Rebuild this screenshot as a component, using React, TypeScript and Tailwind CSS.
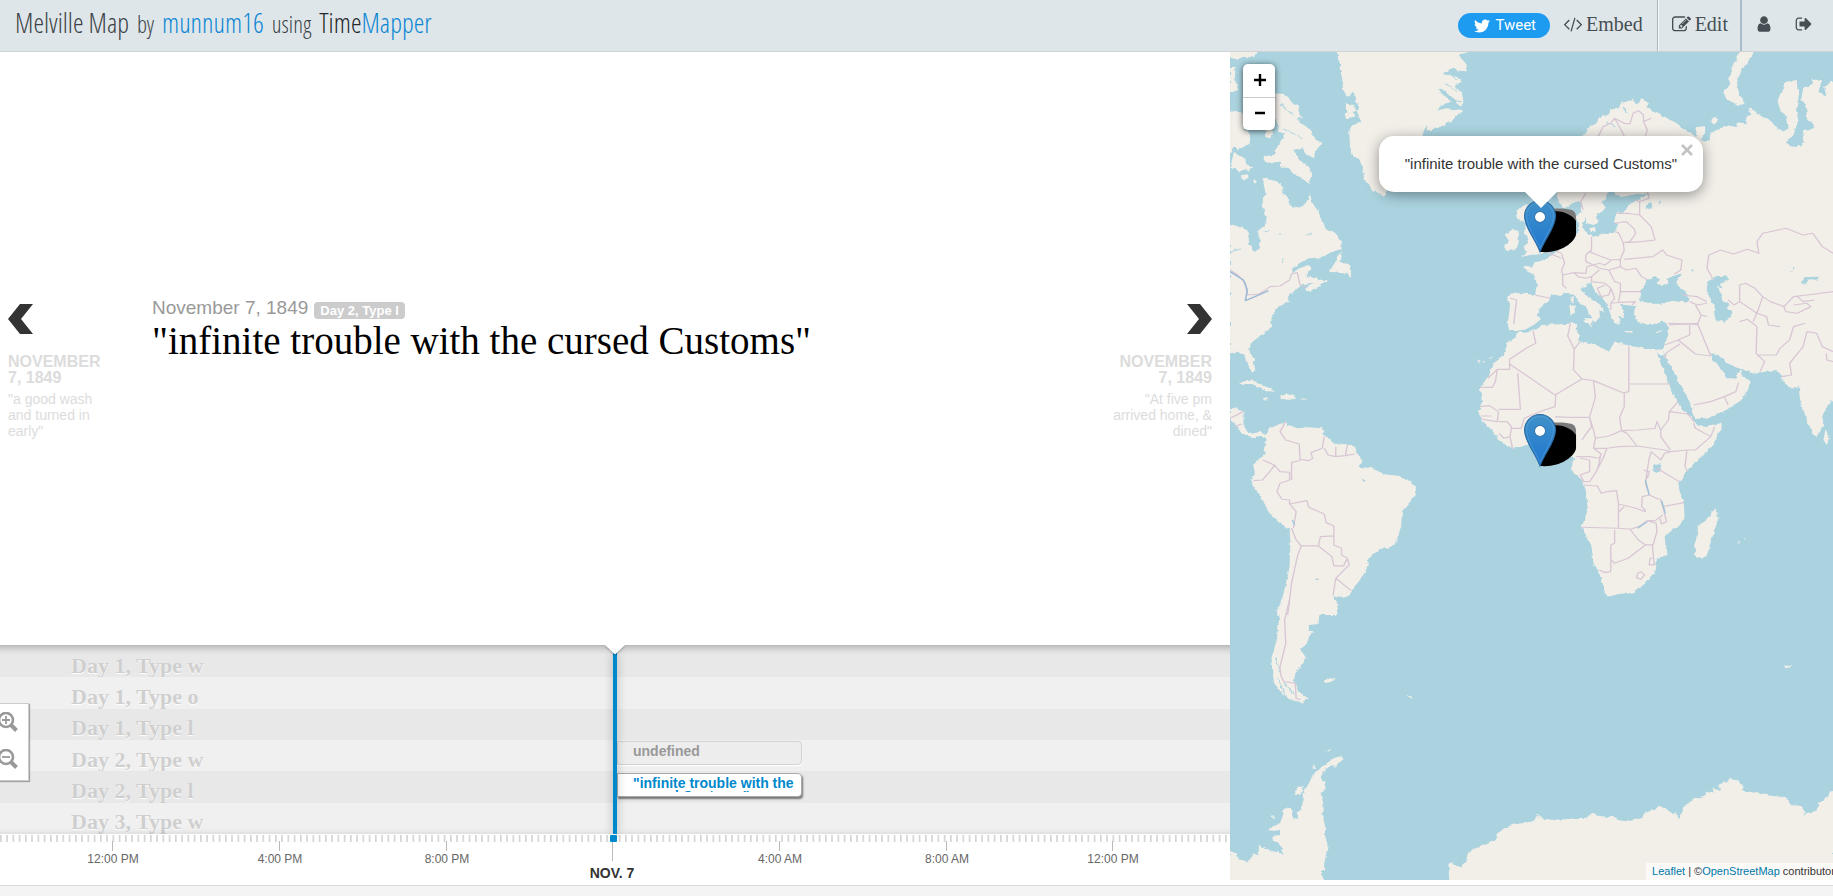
import React from "react";
import { FaTwitter } from "react-icons/fa";

const SANS = "font-['Liberation_Sans',Arial,sans-serif]";
const SERIF = "font-['Liberation_Serif',Georgia,serif]";

function Glyph({ d, className }: { d: string; className: string }) {
  return (
    <svg viewBox="0 0 1792 1792" className={className} fill="currentColor" overflow="visible" aria-hidden="true">
      <path d={d} />
    </svg>
  );
}

const CODE =
  "M553 1399l-50 50q-10 10-23 10t-23-10l-466-466q-10-10-10-23t10-23l466-466q10-10 23-10t23 10l50 50q10 10 10 23t-10 23l-393 393 393 393q10 10 10 23t-10 23zm591-1067l-373 1291q-4 13-15.5 19.5t-23.5 2.5l-62-17q-13-4-19.5-15.5t-2.5-24.5l373-1291q4-13 15.5-19.5t23.5-2.5l62 17q13 4 19.5 15.5t2.5 24.5zm657 651l-466 466q-10 10-23 10t-23-10l-50-50q-10-10-10-23t10-23l393-393-393-393q-10-10-10-23t10-23l50-50q10-10 23-10t23 10l466 466q10 10 10 23t-10 23z";
const PENCIL =
  "M888 1184l116-116-152-152-116 116v56h96v96h56zm440-720q-16-16-33 1l-350 350q-17 17-1 33t33-1l350-350q17-17 1-33zm80 594v190q0 119-84.5 203.5t-203.5 84.5h-832q-119 0-203.5-84.5t-84.5-203.5v-832q0-119 84.5-203.5t203.5-84.5h832q63 0 117 25 15 7 18 23 3 17-9 29l-49 49q-14 14-32 8-23-6-45-6h-832q-66 0-113 47t-47 113v832q0 66 47 113t113 47h832q66 0 113-47t47-113v-126q0-13 9-22l64-64q15-15 35-7t20 29zm-96-738l288 288-672 672h-288v-288zm444 132l-92 92-288-288 92-92q28-28 68-28t68 28l152 152q28 28 28 68t-28 68z";
const USER =
  "M1536 1399q0 109-62.5 187t-150.5 78h-854q-88 0-150.5-78t-62.5-187q0-85 8.5-160.5t31.5-152 58.5-131 94-89 134.5-34.5q131 128 313 128t313-128q76 0 134.5 34.5t94 89 58.5 131 31.5 152 8.5 160.5zm-256-887q0 159-112.5 271.5t-271.5 112.5-271.5-112.5-112.5-271.5 112.5-271.5 271.5-112.5 271.5 112.5 112.5 271.5z";
const SIGN_OUT =
  "M704 1440q0 4 1 20t.5 26.5-3 23.5-10 19.5-20.5 6.5h-320q-119 0-203.5-84.5t-84.5-203.5v-704q0-119 84.5-203.5t203.5-84.5h320q13 0 22.5 9.5t9.5 22.5q0 4 1 20t.5 26.5-3 23.5-10 19.5-20.5 6.5h-320q-66 0-113 47t-47 113v704q0 66 47 113t113 47h312l11.5 1 11.5 3 8 5.5 7 9 2 13.5zm928-544q0 26-19 45l-544 544q-19 19-45 19t-45-19-19-45v-288h-448q-26 0-45-19t-19-45v-384q0-26 19-45t45-19h448v-288q0-26 19-45t45-19 45 19l544 544q19 19 19 45z";

function Header() {
  return (
    <header className="flex h-[52px] shrink-0 items-center justify-between border-b border-[#cfd3d6] bg-[#dfe6ea] pl-[15px]">
      <h1 className="flex items-baseline gap-2 pb-1 font-['Open_Sans_Condensed_Light','Roboto_Condensed',Roboto,sans-serif] text-[27px] leading-[30px] font-light whitespace-nowrap text-[#3c4246]">
        <span>Melville Map</span>
        <span className="text-[23px]">by</span>
        <a href="#munnum16" className="text-[#0d86d3]">munnum16</a>
        <span className="text-[23px]">using</span>
        <a href="#timemapper" className="text-[#26292b]">
          Time<span className="text-[#0d86d3]">Mapper</span>
        </a>
      </h1>
      <nav className="flex h-full items-center text-[#454e53]">
        <button className="flex h-[25px] items-center gap-[5px] rounded-full bg-[#1d9bf0] pr-[14px] pl-4 font-['Roboto',sans-serif] text-[15px] text-white">
          <FaTwitter className="size-4" />
          Tweet
        </button>
        <a href="#embed" className={`${SERIF} flex h-full items-center gap-1 pr-[14px] pb-[3px] pl-[14px] text-[20px]`}>
          <Glyph d={CODE} className="size-[18px]" />
          Embed
        </a>
        <a href="#edit" className={`${SERIF} flex h-full items-center gap-1 border-l border-[#a9b6bf] pr-3 pb-[3px] pl-[14px] text-[20px] shadow-[inset_1px_0_0_#f6f9fa]`}>
          <Glyph d={PENCIL} className="size-[19px]" />
          Edit
        </a>
        <a href="#account" aria-label="Account" className="flex h-full items-center border-l-2 border-[#a9bccb] pr-3 pb-[3px] pl-[13px]">
          <Glyph d={USER} className="size-[18px]" />
        </a>
        <a href="#logout" aria-label="Log out" className="flex h-full items-center pr-5 pb-[3px] pl-[10px]">
          <Glyph d={SIGN_OUT} className="size-[18px]" />
        </a>
      </nav>
    </header>
  );
}

function SlideNav({ side, date, text }: { side: "prev" | "next"; date: string; text: string }) {
  const next = side === "next";
  return (
    <button
      className={`${SANS} flex w-[104px] shrink-0 flex-col text-[#dcdcdc] ${next ? "mr-[18px] items-end text-right" : "ml-2 items-start text-left"}`}
    >
      <svg viewBox="0 0 25 30" className="h-[30px] w-[25px]" fill="#333" aria-hidden="true">
        <path d={next ? "M0 0H13L25 15L13 30H0L12 15Z" : "M25 0H12L0 15L12 30H25L13 15Z"} />
      </svg>
      <span className="mt-5 w-[100px] text-[16px] leading-4 font-bold">{date}</span>
      <span className="mt-[5px] w-[100px] text-[14px] leading-4">{text}</span>
    </button>
  );
}

function Slide() {
  return (
    <section className="flex flex-1 items-start bg-white pt-[252px]">
      <SlideNav side="prev" date="NOVEMBER 7, 1849" text={'"a good wash and turned in early"'} />
      <article className="-mt-2 flex-1 pl-10">
        <div className={`${SANS} flex items-center gap-[6px] text-[19px] leading-6 text-[#999]`}>
          <time>November 7, 1849</time>
          <span className="mt-1 rounded bg-[#ccc] px-[6px] text-[13px] leading-[17px] font-bold text-white">Day 2, Type l</span>
        </div>
        <h2 className={`${SERIF} text-[39px] leading-[42px] whitespace-nowrap text-black`}>"infinite trouble with the cursed Customs"</h2>
      </article>
      <SlideNav side="next" date="NOVEMBER 7, 1849" text={'"At five pm arrived home, & dined"'} />
    </section>
  );
}

const LANES = ["Day 1, Type w", "Day 1, Type o", "Day 1, Type l", "Day 2, Type w", "Day 2, Type l", "Day 3, Type w"];
const HOURS = [
  { x: 112, label: "12:00 PM" },
  { x: 279, label: "4:00 PM" },
  { x: 446, label: "8:00 PM" },
  { x: 779, label: "4:00 AM" },
  { x: 946, label: "8:00 AM" },
  { x: 1112, label: "12:00 PM" },
];

function ZoomIcon({ minus }: { minus?: boolean }) {
  return (
    <svg viewBox="0 0 20 20" className="size-5" fill="none" stroke="#999" aria-hidden="true">
      <circle cx="8" cy="8" r="7" strokeWidth="2.6" />
      <path d={minus ? "M4 8H12" : "M4 8H12M8 4V12"} strokeWidth="1.8" />
      <path d="M13 13L18.500 18.500" strokeWidth="4" />
    </svg>
  );
}

function Timeline() {
  return (
    <section className={`${SANS} relative h-[240px] shrink-0 overflow-hidden bg-white`}>
      <div className="flex h-[189px] flex-col border-t border-[#b8b8b8]">
        {LANES.map((lane, i) => (
          <div
            key={lane + i}
            className={`${SERIF} flex flex-1 items-center pt-2 pl-[71px] text-[22px] leading-[22px] font-bold text-[#cfcfcf] [text-shadow:0_1px_1px_#fff] ${i % 2 ? "bg-[#f0f0f0]" : "bg-[#e8e8e8]"}`}
          >
            {lane}
          </div>
        ))}
      </div>
      <div className="absolute -inset-x-3 top-px h-[188px] shadow-[inset_0_5px_6px_-2px_rgba(0,0,0,0.2),inset_0_-4px_6px_-4px_rgba(0,0,0,0.15)]" />
      <svg className="h-[51px] w-full" aria-hidden="true">
        <defs>
          <pattern id="minor" width="6.25" height="8" patternUnits="userSpaceOnUse" x="0">
            <rect x="0" y="1" width="1.600" height="7" fill="#d2d2d2" />
          </pattern>
        </defs>
        <rect width="100%" height="8" fill="url(#minor)" />
        {HOURS.map((h) => (
          <rect key={h.x} x={h.x} y="7" width="1" height="10" fill="#bbb" />
        ))}
        <rect x="612" y="8" width="1" height="19" fill="#bbb" />
      </svg>
      {HOURS.map((h) => (
        <span key={h.x} className="absolute top-[206px] w-20 -translate-x-1/2 text-center text-[12px] leading-4 text-[#666]" style={{ left: h.x + 1 }}>
          {h.label}
        </span>
      ))}
      <span className="absolute top-[220px] left-[612px] -translate-x-1/2 text-[14px] leading-4 font-bold whitespace-nowrap text-[#333]">NOV. 7</span>

      <button className="absolute top-[96px] left-[617px] flex h-6 w-[185px] items-start rounded-r border border-[#d2d2d2] bg-[#ededed] pt-[3px] pl-[15px] text-left text-[14px] leading-[13px] font-bold text-[#999] shadow-[0_1px_1px_#fff]">
        undefined
      </button>
      <button className="absolute top-[128px] left-[617px] flex h-6 w-[185px] items-start rounded-r border border-[#aaa] bg-white pt-[3px] pl-[15px] text-left shadow-[1px_2px_2px_rgba(0,0,0,0.5)]">
        <span className="h-[15px] w-[164px] overflow-hidden text-[14px] leading-[13px] font-bold text-[#0088cc]">"infinite trouble with the cursed Customs"</span>
      </button>
      <div className="absolute top-2 left-[613px] h-[181px] w-1 bg-[#0088cc] shadow-[0_0_10px_rgba(0,0,0,0.3)]" />
      <div className="absolute top-[190px] left-[610px] size-[7px] rounded-[1px] bg-[#0088cc]" />
      <svg viewBox="0 0 20 10" className="absolute top-0 left-[605px] h-[10px] w-5 drop-shadow-[0_1px_1px_rgba(0,0,0,0.3)]" aria-hidden="true">
        <path d="M0 0H20L10 9.500Z" fill="#fff" />
      </svg>

      <div className="absolute top-[58px] -left-[3px] flex h-[78px] w-8 flex-col gap-[17px] border border-[#ccc] bg-white pt-2 shadow-[1px_1px_1px_rgba(0,0,0,0.3)]">
        <button aria-label="Zoom in"><ZoomIcon /></button>
        <button aria-label="Zoom out"><ZoomIcon minus /></button>
      </div>
    </section>
  );
}

const NORTH_LAND = [
  "M276 0L285 40 295 90 293 110 300 135 310 140 315 125 328 145 325 155 335 165 330 180 340 215 325 225 318 225 310 245 312 290 322 320 340 335 345 355 348 380 370 420 385 430 400 440 408 430 405 400 435 330 470 290 500 258 508 228 515 242 540 235 575 215 603 180 560 175 540 182 548 165 575 155 540 118 560 122 585 150 600 170 605 160 600 125 585 110 600 95 590 80 555 72 575 55 605 65 615 60 612 40 595 15 634 0Z",
  "M118 130L140 132 155 145 165 160 180 170 178 182 187 205 172 205 185 220 212 240 215 258 238 280 225 300 218 325 195 310 190 295 165 300 180 330 205 350 212 375 205 400 190 388 160 365 150 350 130 350 130 335 100 338 88 330 88 318 115 315 118 300 135 270 140 250 125 245 128 225 110 200Z",
  "M300 160L320 165 330 180 318 188 325 200 300 205 302 185Z",
  "M0 0H72L62 22 35 20 20 28 0 24Z",
  "M0 185L20 182 40 200 45 230 35 240 55 255 50 285 35 290 20 300 12 290 0 312Z",
  "M10 305L25 318 40 325 42 342 60 352 50 362 38 355 25 368 18 355 0 358Z",
  "M0 55L15 50 12 90 22 120 0 128Z",
  "M92 240h18l5 15-12 10-12-5Z",
  "M30 380l12-8 6 8-12 12ZM62 388l8 4-4 12-6-6Z",
  "M85 385L110 390 135 400 137 425 150 440 155 465 175 475 195 465 208 432 215 460 232 490 240 510 250 540 275 550 290 575 290 597 265 605 240 622 205 625 180 640 160 660 160 672 180 655 205 645 212 655 200 668 205 680 240 690 255 690 235 708 200 727 193 715 215 698 190 702 168 722 150 735 155 755 125 770 105 790 97 810 105 840H0V520L20 530 45 537 50 580 65 607 78 590 80 570 70 545 90 530 95 505 90 480 80 465 92 430Z",
  "M258 665L272 640 290 602 285 635 312 645 318 670 312 685 308 672 285 668Z",
  "M915 258L930 242 925 235 950 222 960 202 982 195 990 180 1010 175 1020 158 1045 150 1060 163 1070 148 1092 160 1080 172 1095 182 1130 200 1165 222 1190 245 1215 262 1210 232 1235 228 1235 250 1225 262 1232 275 1248 270 1248 250 1265 240 1290 225 1318 232 1320 218 1345 220 1340 200 1368 190 1400 210 1425 235 1440 245 1450 230 1445 200 1430 180 1424 150 1445 95 1475 90 1480 130 1472 180 1478 210 1465 255 1445 278 1470 292 1492 280 1488 245 1520 230 1500 205 1498 170 1485 150 1490 115 1515 105 1515 85 1540 95 1530 125 1550 140 1545 110 1568 95V840H1140L1150 822 1125 815 1090 825 1060 815 1050 790 1055 768 1030 765 1015 765 1020 785 1025 802 1010 797 1015 825 1000 818 988 790 985 775 970 745 950 725 940 702 930 700 925 712 910 713 925 735 945 750 973 778 972 790 960 780 962 800 948 820 940 800 925 770 905 755 895 735 878 728 860 738 835 733 830 752 812 768 800 790 805 810 790 825 765 840H725L722 820 728 770 722 735 732 727 770 732 793 735 798 700 790 675 762 655 765 648 785 650 790 638 810 632 830 620 845 605 855 600 880 585 890 560 905 545 905 520 898 505 915 485 925 500 915 530 925 545 945 560 970 552 1000 545 1010 520 998 515 1005 488 1030 482 1035 465 1060 450 1070 440 1095 435 1060 432 1020 440 1000 432 1000 400 940 300Z",
  "M845 418L855 455 868 475 890 462 905 450 915 470 915 485 930 520 945 525 955 520 955 495 978 475 968 458 985 425 990 400Z",
  "M745 485L765 465 790 455 800 510 820 540 840 575 835 600 810 612 780 615 755 622 770 605 760 590 775 575 765 545 770 520 750 510Z",
  "M735 538L752 545 750 580 745 593 720 602 712 590 725 572 715 555Z",
  "M1328 0H1366L1350 30 1330 60 1318 95 1322 130 1338 160 1320 168 1290 145 1282 125 1297 105 1300 70Z",
  "M1252 208L1262 200 1272 212 1260 224 1252 218Z",
  "M1350 172L1370 188 1362 197 1350 186Z",
  "M885 742L894 737 893 760 887 762Z",
  "M883 768L896 766 897 792 885 796Z",
  "M915 812L945 808 940 828Z",
  "M935 535L950 530 950 545 938 547Z",
];

const MIDDLE_LAND = [
  "M0 0H120L105 30 107 55 80 75 55 100 50 120 62 150 65 180 58 188 45 165 38 138 20 125 0 130Z",
  "M25 222L45 210 70 215 100 235 118 245 90 243 60 222Z",
  "M130 260L148 250 172 262 155 270 135 266Z",
  "M84 266L95 262 102 268 92 272Z",
  "M185 266H200V269H185Z",
  "M0 300L10 293 35 305 35 345 45 365 65 372 80 362 95 375 92 388 80 375 65 385 35 372 15 345 0 325Z",
  "M92 375L105 350 130 345 145 333 150 345 175 355 205 352 240 355 245 375 255 385 275 405 305 402 325 410 330 430 345 450 335 470 370 475 400 492 440 498 470 515 483 530 483 555 465 580 447 605 445 650 435 685 425 710 390 718 360 745 355 780 335 815 310 855 300 862 270 858 268 865 282 885 275 915H120L140 850 155 770 157 700 155 660 130 640 105 615 85 570 60 530 55 510 65 490 60 465 75 450 90 430 92 400Z",
  "M750 63L765 68 790 62 815 45 870 42 905 38 905 50 898 60 910 75 905 92 950 103 985 125 1000 95 1040 107 1090 118 1125 115 1130 140 1110 130 1125 175 1140 215 1150 250 1165 275 1175 300 1195 315 1212 345 1230 350 1278 338 1278 355 1255 405 1225 440 1185 485 1165 520 1170 550 1180 580 1182 620 1170 645 1130 680 1135 735 1110 745 1107 780 1080 820 1050 848 1010 852 985 860 975 850 970 825 960 790 945 760 940 710 920 665 915 650 930 600 925 540 915 510 890 485 890 465 895 440 870 440 850 415 830 405 800 408 770 405 735 417 700 390 680 360 655 330 645 305 655 280 650 235 670 200 685 160 715 135 720 100 745 80Z",
  "M1262 595L1272 630 1265 640 1255 680 1240 735 1225 747 1210 735 1207 705 1215 680 1213 650 1240 630Z",
  "M1140 30L1135 90 1125 118 1132 140 1150 175 1165 215 1195 275 1203 310 1210 328 1250 320 1290 300 1330 270 1357 215 1330 200 1328 178 1315 205 1290 205 1280 180 1255 150 1250 130 1265 132 1300 165 1335 180 1365 188 1420 183 1445 200 1432 202 1455 235 1475 235 1478 220 1482 270 1500 330 1515 370 1525 378 1545 350 1540 320 1555 280 1568 270V0H1140Z",
  "M1548 358L1560 385 1552 402 1543 390Z",
  "M1025 62L1048 64 1045 68 1028 66Z",
  "M1105 68L1122 60 1115 70Z",
  "M920 25L945 25 942 42Z",
  "M1320 693l8 3-6 3zM1338 684l5 3-4 2zM642 148l4 8 6-3zM655 152l8 2-3 4zM675 145l5-4-2 10z",
];

const SOUTH_LAND = [
  "M135 0H275L282 15 270 40 232 46 230 72 205 75 205 92 217 97 205 110 200 130 182 150 197 172 185 195 170 218 166 245 180 280 205 295 185 308 160 300 135 280 115 250 110 220 108 170 122 120 127 60Z",
  "M243 243L255 236 272 236 268 245 248 249Z",
  "M457 282L470 287 475 297 465 291Z",
  "M1441 193L1449 198 1459 196 1456 206 1444 208Z",
  "M0 753L15 760 18 770 45 788 60 770 58 760 75 765 75 735 90 745 100 750 142 762 130 735 112 722 110 710 130 705 130 690 100 692 105 683 130 670 138 645 135 635 145 622 158 625 165 658 173 658 175 635 187 632 190 580 205 550 215 525 240 500 270 475 290 468 295 477 275 500 260 500 240 520 235 530 248 548 248 568 238 575 243 620 238 640 246 670 248 710 254 740 245 790 245 805 236 825 245 840V880H0Z",
  "M168 585L178 560 192 562 185 585ZM213 505L222 495 222 508ZM106 650L116 650 114 660ZM245 456L268 444 262 452Z",
  "M570 880V840L568 795 580 790 600 803 615 785 625 750 650 740 690 717 695 700 730 675 785 665 800 645 812 656 845 660 880 657 925 657 940 640 960 648 1000 652 1030 665 1070 655 1080 635 1105 630 1115 617 1140 630 1148 642 1160 640 1163 655 1172 655 1175 625 1210 595 1240 585 1240 575 1258 582 1255 563 1275 573 1270 555 1300 537 1320 542 1335 560 1330 570 1370 580 1410 588 1450 592 1455 615 1485 618 1497 640 1488 648 1525 632 1530 610 1555 590 1560 575 1568 573V880Z",
];

const NORTH_WATER = [
  "M1065 755L1070 722 1085 690 1105 678 1118 690 1110 700 1125 708 1140 700 1135 688 1165 672 1175 672 1162 692 1160 705 1180 720 1195 745 1190 758 1150 752 1110 765 1080 757Z",
  "M1240 700L1260 680 1290 676 1298 690 1275 700 1280 712 1265 712 1280 735 1283 755 1300 765 1290 770 1305 800 1303 820 1275 824 1258 805 1262 775 1248 745 1240 725Z",
  "M1487 700L1495 682 1530 680 1530 688 1500 692 1492 702Z",
  "M1080 468L1095 458 1098 472 1088 478ZM1112 455L1122 452 1120 468Z",
  "M1455 668L1465 650 1468 655ZM1198 662L1208 656 1202 666Z",
];

const NORTH_BORDERS =
  "M0 660L20 675 40 700 45 735 75 732 105 710 130 708 155 690 160 672 175 668 182 705 200 712" +
  "M958 258L970 230 990 220 1000 205 1010 225 1025 258M1000 205L1025 220 1040 222 1048 190 1062 182 1075 195 1075 215 1095 205M1075 215L1085 240 1080 258" +
  "M918 480L912 455 925 430M1000 520L1030 515 1050 535 1055 550 1040 575 1025 578M1005 490L1035 490 1065 495 1065 455 1055 450M1065 495L1095 530 1105 570 1070 575 1022 578 1010 548 1000 545" +
  "M1065 455L1090 445 1085 425M940 560L940 600 925 615M935 605L955 615 990 630 1015 628 1025 600 1022 578M925 615L925 635 945 645 960 640 975 645 990 632M1015 628L1015 650 985 660 960 655 945 645M1015 650L1030 660 1055 655 1070 680 1085 690M1025 628L1100 620 1125 600 1135 615 1175 630 1172 660 1155 672" +
  "M865 675L862 660 870 640 862 610 830 595M830 595L830 610 862 625M865 675L895 668 925 670 928 650 945 645M865 675L865 705 875 715M895 668L905 680 925 685 940 680 960 660M940 680L940 695 975 700 990 715 985 735 965 740 955 715 975 705M985 660L1000 695 1015 700 1015 725 1055 725 1070 725M990 715L1000 745 990 760 1015 757 1055 755M1015 725L1010 757M990 760L990 780" +
  "M793 735L832 745M728 745L745 750 740 800 738 822M1045 765L1055 755" +
  "M1240 655L1245 615 1275 600 1310 612 1345 598 1375 610 1370 575 1385 550 1445 535 1490 555 1515 550 1540 590 1568 610M1240 655L1250 675 1255 688M1325 755V705L1340 700 1365 715 1385 740 1405 755 1440 770 1465 740 1500 735 1568 725M1325 755L1310 765 1295 750M1385 740L1370 790 1360 815M1440 770L1445 785 1475 790 1510 770 1500 760 1465 765M1475 740L1490 755 1520 750M1175 735L1215 740 1240 755M1195 755L1215 765 1240 760M1210 765L1225 795 1240 800M1140 820L1195 822 1215 825 1225 795M1325 755L1370 790 1395 800 1400 825 1430 830";

const MIDDLE_BORDERS =
  "M788 62L795 100 770 115 727 148V178H695L690 215 682 232 650 232M695 178L670 205M727 162L845 255 915 207M748 190L755 298H698M650 290L675 287 698 305 695 335 655 328M652 318H680M698 335L720 335 732 350 728 380 712 385 700 370M732 355L757 355 765 325 810 303 845 290 847 255M735 417L728 380M775 350L790 345 835 345M845 320L880 322 935 322 940 350 930 365 915 390M885 40L878 78 895 118 893 180 915 207 945 212 1025 250M895 118L910 95" +
  "M1037 110V222H1148M1037 222V245L1025 248V290L1013 322 1018 362 985 378 950 385 945 360 935 322M945 212L950 262 935 320M1018 362L1032 370 1058 408 1130 420 1145 425 1188 420 1210 420 1250 380 1210 355 1205 340M1018 362L1060 360 1105 355 1110 335 1120 360 1120 380 1145 420M1250 380L1260 350M1142 305L1165 275M1142 305L1190 312 1207 335M1142 305L1140 330 1120 360M950 385L945 415 980 415 1010 410 1058 408M945 415L965 432 960 445 935 440 900 440M965 432L955 480 935 515 920 515 910 495 935 485 935 450 910 445M980 415L970 445 950 490" +
  "M920 525L955 528 965 550 980 545 1005 542 1010 582 1055 595 1080 605 1078 598 1070 590 1072 560 1090 555 1115 568M1010 582V655L915 652M1010 655L1040 658 1062 650 1085 632 1105 632 1125 615M1025 590L1010 607M1000 660V700L990 705V785L975 788 960 780M990 748L1000 760 1035 745 1080 705 1062 690 1040 658M1080 705L1100 705 1110 665 1108 640 1085 632M1098 705L1103 765 1090 765 1092 745 1103 745M1060 790L1068 785 1078 795 1068 808 1057 803ZM1180 578L1125 590 1118 565M1125 590L1135 635 1122 642 1118 625M1095 425L1090 445 1085 480 1080 520 1090 555M1095 425L1120 450 1130 430 1145 425M1110 475L1168 515M1188 420L1183 470 1190 485M1075 480L1090 485 1085 505" +
  "M145 335L130 365 145 390 180 402 182 448 205 452 215 445 210 428 240 415 245 380M245 415L255 435 275 440 275 410M275 440L300 437 325 432M305 405L300 437M160 510V458L185 450M62 512L85 510 110 475 115 465 85 450M115 465L130 485 155 487V510L130 520 122 545 135 568 155 570 155 582 200 572 205 592 245 612 250 638 270 648 270 678 235 680 230 708 185 708 172 690 160 655M155 582L172 605 165 655M230 708L265 740 270 768 295 768 305 745 290 735 290 715 270 705 270 678M305 745L310 765 275 805 315 842M275 805L268 855M185 708L175 740 160 820 150 915" +
  "M1140 45L1215 40 1250 138 1210 132 1165 90 1130 105M1165 90L1195 75 1195 45M1130 145L1135 128 1170 102M1205 285L1250 275 1285 260 1315 245 1322 218M1285 260L1295 285M1325 35L1345 28 1370 50 1368 130 1390 155 1378 185M1370 135L1420 135 1430 115 1455 90 1465 50 1495 40M1500 65L1490 110 1455 160 1460 195 1435 200M1500 65L1525 70 1540 110 1568 125M1550 130L1552 150 1568 155M0 325L35 305M12 350L30 342";

const INLAND_WATER = "M1100 465L1122 463 1118 485 1102 487Z";
const RIVERS =
  "M1080 510L1090 555M1122 572L1132 610M1060 655L1085 635M162 630L168 645M222 808H230M345 508L350 514";

function Marker({ x, y }: { x: number; y: number }) {
  return (
    <g transform={`translate(${x} ${y})`}>
      <path d="M10 -43C20 -44 28 -43 32 -42Q36 -40 36 -35V-16L10 0Z" fill="#7a7a7a" />
      <path d="M0 0C14 1 22 -3 28 -7C32 -10 36 -14 36 -19V-31C33 -36 26 -41 12 -41L6 -20Z" fill="#000" />
      <path d="M0 0C-5 -14 -15.500 -24 -15.500 -36A15.500 15.500 0 0 1 15.500 -36C15.500 -24 5 -14 0 0Z" fill="url(#pin)" stroke="#2a69a0" />
      <path d="M0 -4C-5 -15 -13.500 -25 -13.500 -36A13.500 13.500 0 0 1 13.500 -36C13.500 -25 5 -15 0 -4Z" fill="none" stroke="#6bafdf" strokeOpacity="0.4" />
      <circle cy="-35" r="5.500" fill="#fff" stroke="#2e6fa8" />
    </g>
  );
}

function WorldMap() {
  return (
    <svg viewBox="0 0 603 828" preserveAspectRatio="xMidYMid slice" className="h-full w-full" aria-label="World map" role="img">
      <defs>
        <linearGradient id="pin" x1="0" y1="0" x2="0" y2="1">
          <stop offset="0" stopColor="#4091c9" />
          <stop offset="1" stopColor="#1f77d0" />
        </linearGradient>
        <filter id="coast" filterUnits="userSpaceOnUse" x="-10" y="-10" width="623" height="848" colorInterpolationFilters="sRGB">
          <feTurbulence type="fractalNoise" baseFrequency="0.2" numOctaves="2" seed="4" />
          <feDisplacementMap in="SourceGraphic" scale="4" xChannelSelector="R" yChannelSelector="G" />
        </filter>
      </defs>
      <rect width="603" height="828" fill="#aad3df" />
      <g filter="url(#coast)">
        <rect x="-10" y="-10" width="623" height="848" fill="#aad3df" />
        <g transform="scale(0.3846 0.3333)" fill="#f2efe9">
          <g transform="translate(0 -6)">
            {NORTH_LAND.map((d) => <path key={d} d={d} />)}
            <path d="M1560 95H1590V860H1560Z" />
            {NORTH_WATER.map((d) => <path key={d} d={d} fill="#aad3df" />)}
          </g>
          <g transform="translate(0 774)">
            {MIDDLE_LAND.map((d) => <path key={d} d={d} />)}
            <path d="M1560 0H1590V262L1560 275Z" />
            <path d={INLAND_WATER} fill="#aad3df" />
            <path d="M1258 0H1303V20L1285 36 1262 30Z" fill="#aad3df" />
          </g>
          <g transform="translate(0 1644)">
            {SOUTH_LAND.map((d) => <path key={d} d={d} />)}
          </g>
          <g fill="none" stroke="#aad3df" strokeWidth="3">
            <path d="M560 95L590 115M560 135L600 150M570 60L590 85M130 155L165 190M140 230L190 260M0 600L30 590M980 210L1000 225M1020 165L1035 185" />
            <path d="M125 1880L135 1910 150 1935M120 1820L128 1860M140 1895L165 1925" />
            <path d="M125 545h10M200 550l15-4M140 620l-4 12M90 540l12-5" />
          </g>
        </g>
      </g>
      <g transform="scale(0.3846 0.3333)" fill="none" stroke="#d8c6d4" strokeWidth="3.500" strokeLinejoin="round">
        <path transform="translate(0 -6)" d={NORTH_BORDERS} />
        <path transform="translate(0 774)" d={MIDDLE_BORDERS} />
        <path transform="translate(0 1644)" d="M155 0L142 60 145 130 130 200 132 225 140 245 170 250 172 297 185 298" />
        <path transform="translate(0 774)" d={RIVERS} stroke="#9cc3da" />
        <path transform="translate(0 -6)" d="M0 665L35 690 45 720 40 752 65 740 100 722" stroke="#9db9d6" strokeWidth="4" />
      </g>
      <Marker x={310} y={200} />
      <Marker x={310} y={414} />
    </svg>
  );
}

function MapPane() {
  return (
    <section className={`${SANS} relative mb-[5px] w-[32.9%] shrink-0 overflow-hidden`}>
      <div className="absolute inset-0">
        <WorldMap />
      </div>
      <div className="absolute top-3 left-[13px] flex w-8 flex-col overflow-hidden rounded-[5px] bg-white shadow-[0_1px_6px_rgba(0,0,0,0.65)]">
        <button aria-label="Zoom in" className="flex h-[34px] items-center justify-center border-b border-[#ccc] pl-[2px]">
          <svg viewBox="0 0 14 14" className="size-[14px]" stroke="#000" strokeWidth="2.400"><path d="M1 6H13M7 0V12" /></svg>
        </button>
        <button aria-label="Zoom out" className="flex h-8 items-center justify-center pl-[2px]">
          <svg viewBox="0 0 14 14" className="size-[14px]" stroke="#000" strokeWidth="2.400"><path d="M2 6H12" /></svg>
        </button>
      </div>
      <div className="absolute top-[84px] left-[311px] flex h-14 w-[324px] -translate-x-1/2 items-center justify-center rounded-[15px] bg-white text-[15px] whitespace-nowrap text-[#333] shadow-[0_3px_14px_rgba(0,0,0,0.4)]">
        "infinite trouble with the cursed Customs"
        <button aria-label="Close popup" className="absolute top-2 right-[10px]">
          <svg viewBox="0 0 12 12" className="size-3" stroke="#c3c3c3" strokeWidth="2.600"><path d="M1 1L11 11M11 1L1 11" /></svg>
        </button>
        <svg viewBox="0 0 32 16" className="absolute top-full left-[146px] h-4 w-8" aria-hidden="true"><path d="M0 0H32L16 16Z" fill="#fff" /></svg>
      </div>
      <p className="absolute bottom-0 left-[69%] bg-white/70 px-[6px] text-[11px] leading-[17px] whitespace-nowrap text-[#333]">
        <a href="#leaflet" className="text-[#0078a8]">Leaflet</a> | ©<a href="#osm" className="text-[#0078a8]">OpenStreetMap</a> contributors
      </p>
    </section>
  );
}

export default function App() {
  return (
    <div className="flex h-screen min-h-[600px] flex-col overflow-hidden bg-white">
      <Header />
      <main className="flex min-h-0 flex-1">
        <div className="flex min-w-0 flex-1 flex-col">
          <Slide />
          <Timeline />
        </div>
        <MapPane />
      </main>
      <footer className="h-[11px] shrink-0 border-t border-[#d9d9d9] bg-[#f4f4f4]" />
    </div>
  );
}
